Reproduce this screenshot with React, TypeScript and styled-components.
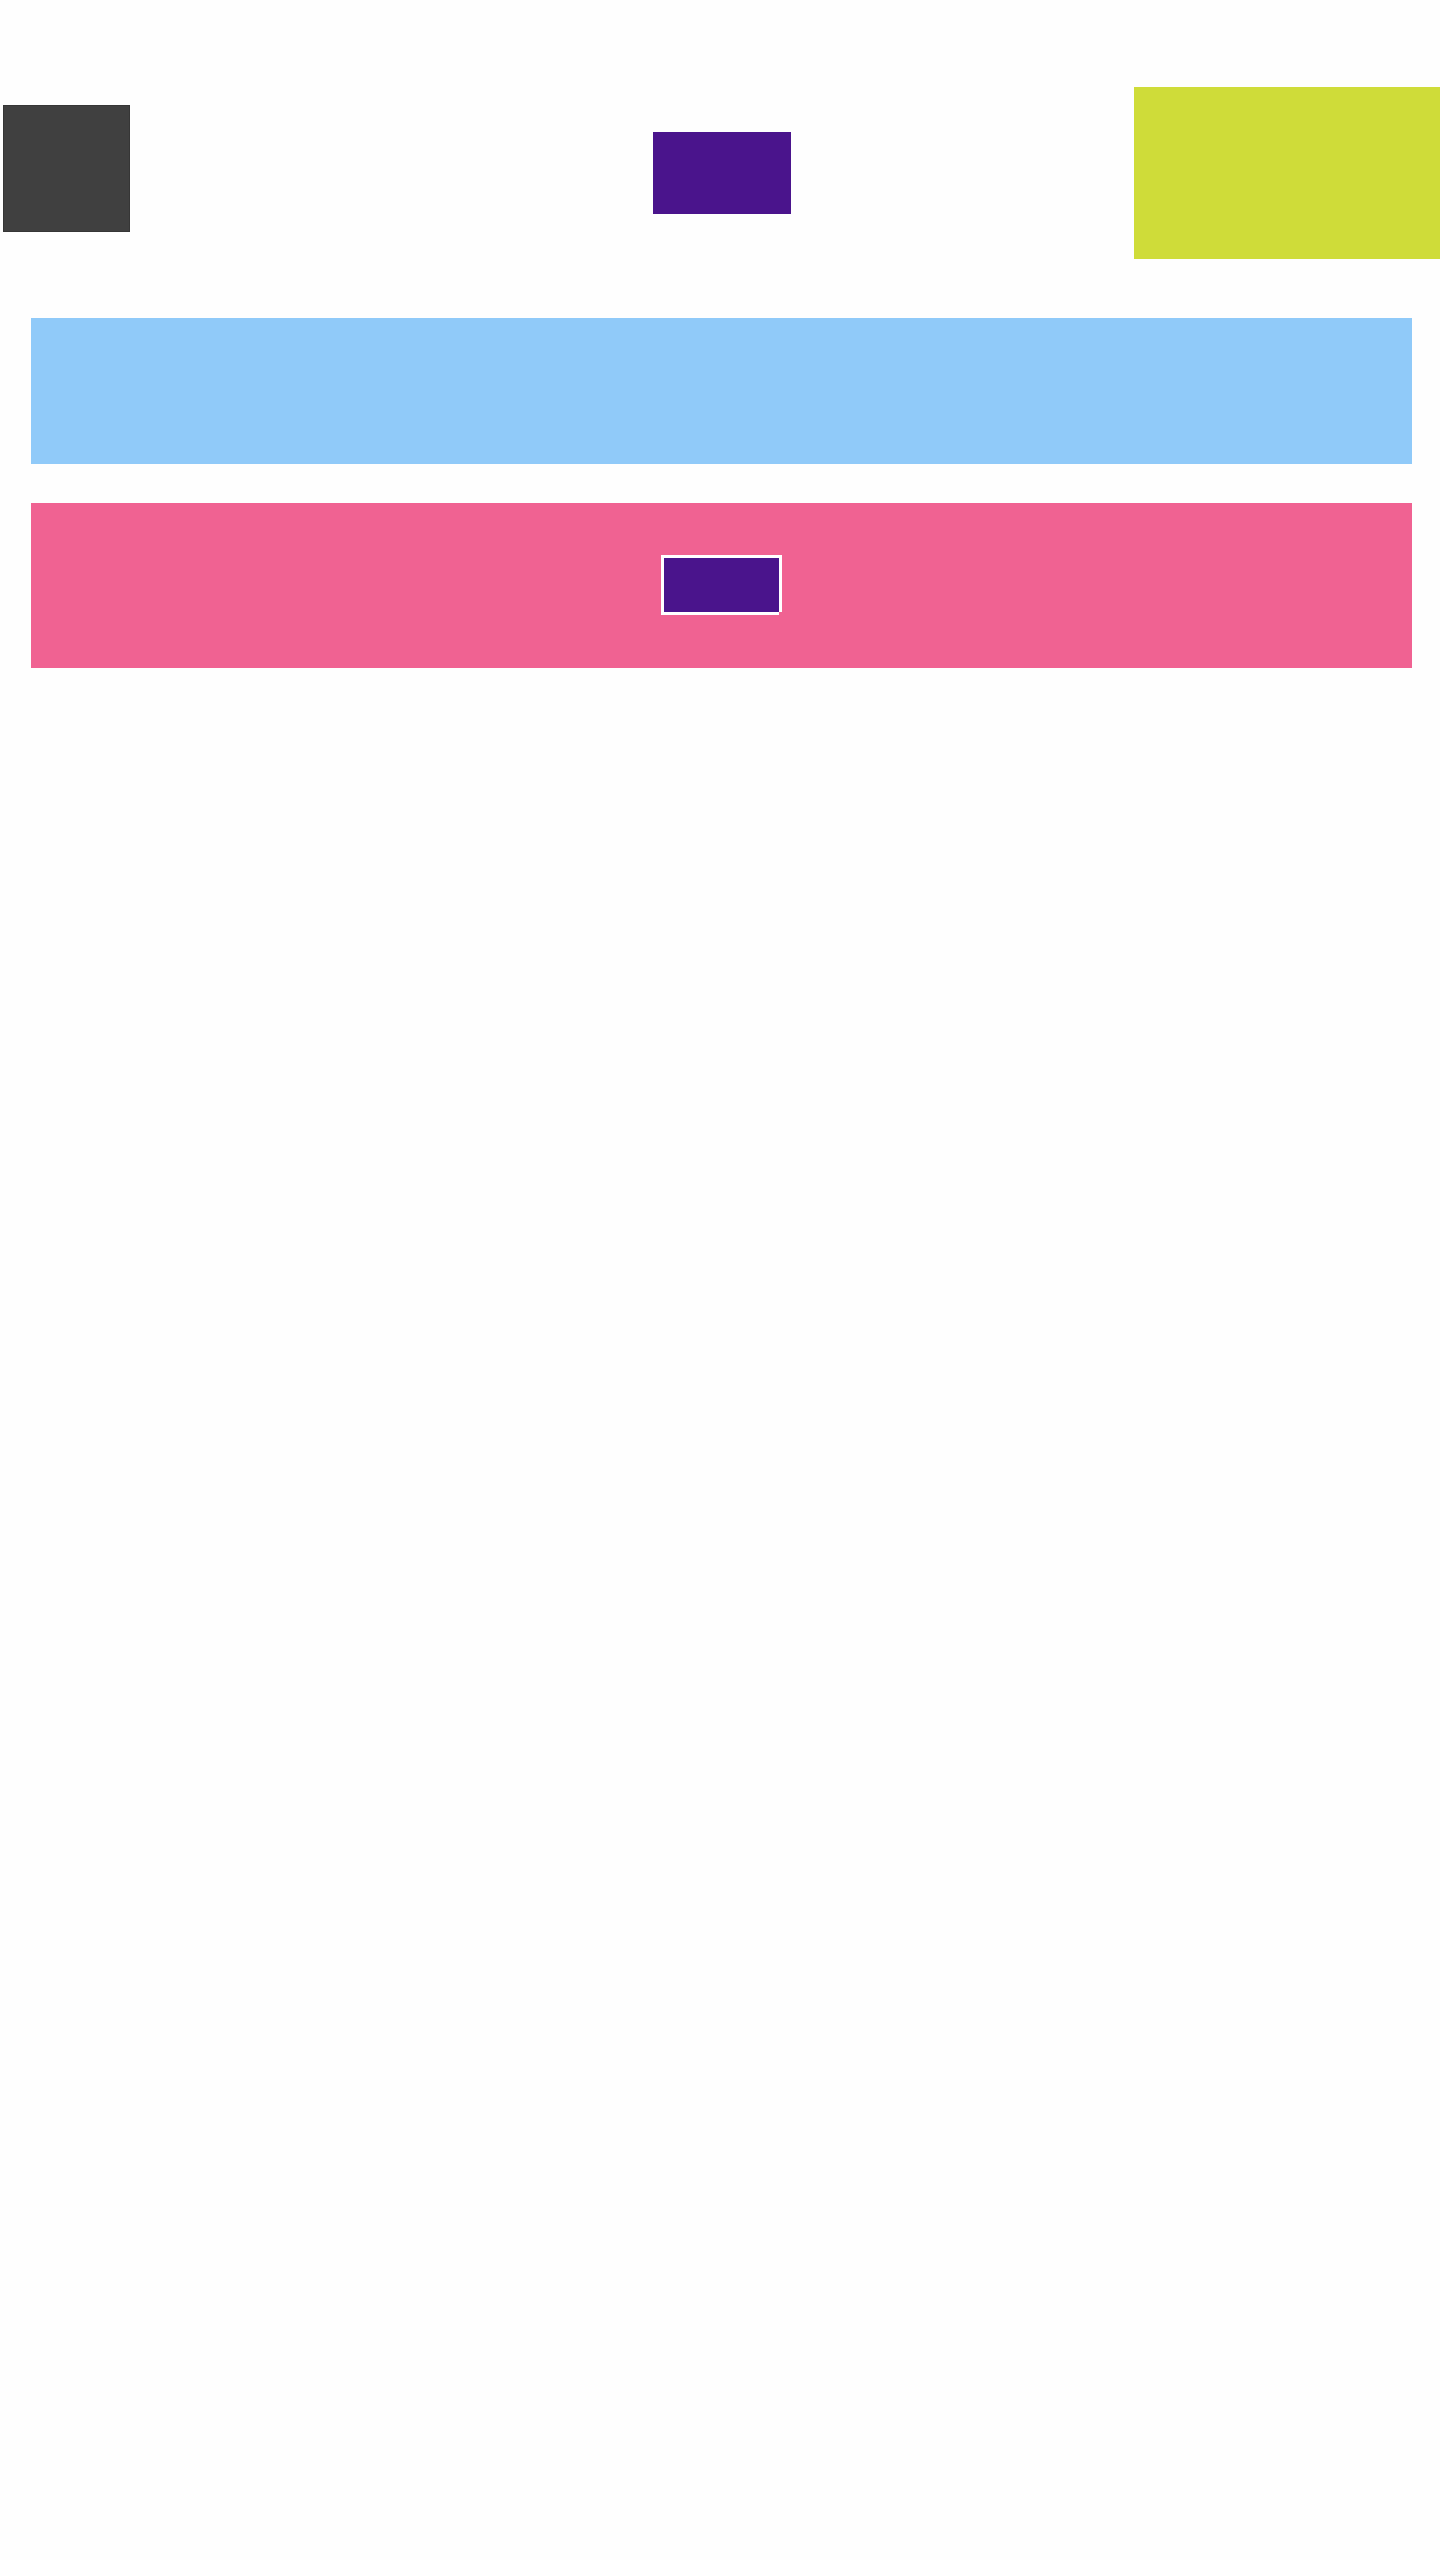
import React from "react";
import styled, { createGlobalStyle } from "styled-components";

const Global = createGlobalStyle`
  html, body {
    margin: 0;
    padding: 0;
    background: #fefefe;
    font-family: "Liberation Sans", Arial, sans-serif;
  }
`;

const Page = styled.div`
  padding-top: 87px;
  display: flex;
  flex-direction: column;
`;

const Header = styled.header`
  display: grid;
  grid-template-columns: 1fr auto 1fr;
  align-items: center;
  margin-left: 3px;
  height: 172px;
`;

const Logo = styled.div`
  justify-self: start;
  box-sizing: border-box;
  width: 127px;
  height: 127px;
  margin-bottom: 9px;
  background: #404040;
  border: 1px solid #363636;
`;

const NavBlock = styled.div`
  width: 138px;
  height: 82px;
  background: #4a148c;
`;

const Aside = styled.div`
  justify-self: end;
  width: 306px;
  height: 172px;
  background: #cfdc39;
`;

const Band = styled.section<{ $bg: string; $h: number; $top: number }>`
  box-sizing: border-box;
  margin: ${(p) => p.$top}px 28px 0 31px;
  height: ${(p) => p.$h}px;
  background: ${(p) => p.$bg};
  display: flex;
  align-items: center;
  justify-content: center;
`;

const Button = styled.button`
  width: 115px;
  height: 54px;
  padding: 0;
  border: none;
  background: #4a148c;
  margin-top: -1px;
  box-shadow:
    -3px -3px 0 #ffffff,
    0 -3px 0 #ffffff,
    3px -3px 0 #ffffff,
    -3px 0 0 #ffffff,
    3px 0 0 #ffffff,
    -3px 3px 0 #ffffff,
    0 3px 0 #ffffff;
`;

export default function App() {
  return (
    <>
      <Global />
      <Page>
        <Header>
          <Logo />
          <NavBlock />
          <Aside />
        </Header>
        <Band $bg="#90caf9" $h={146} $top={59} />
        <Band $bg="#f06292" $h={165} $top={39}>
          <Button aria-label="button" />
        </Band>
      </Page>
    </>
  );
}
